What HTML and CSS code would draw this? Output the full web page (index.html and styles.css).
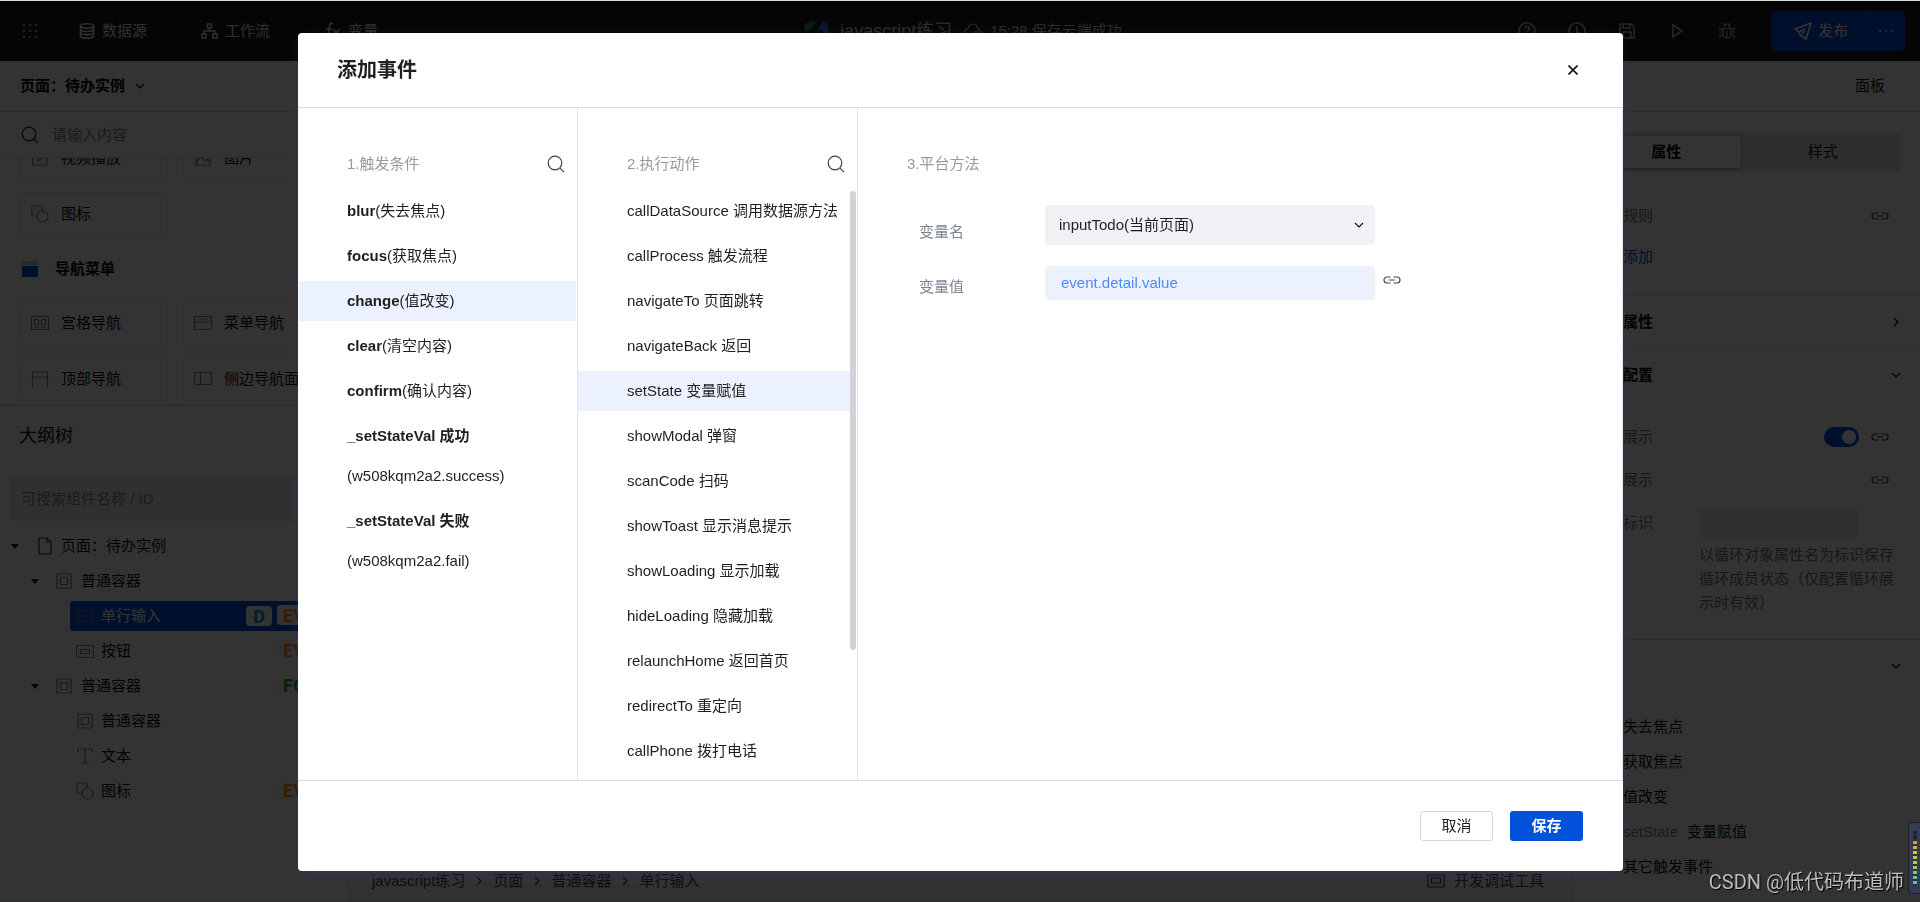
FILE: index.html
```html
<!DOCTYPE html>
<html lang="zh-CN">
<head>
<meta charset="utf-8">
<title>添加事件</title>
<link rel="stylesheet" href="styles.css">
</head>
<body>
<svg class="sprite" aria-hidden="true">
  <symbol id="search" viewBox="0 0 18 18"><circle cx="8" cy="8" r="6.8"/><path d="M13 13.2l4 4"/></symbol>
  <symbol id="down" viewBox="0 0 10 10"><path d="M1 3l4 4 4-4"/></symbol>
  <symbol id="right" viewBox="0 0 10 10"><path d="M3 1l4 4-4 4"/></symbol>
  <symbol id="link" viewBox="0 0 18 10"><path d="M7.500 2H4a3 3 0 0 0 0 6h3.500M10.500 2H14a3 3 0 0 1 0 6h-3.500M6 5h6"/></symbol>
  <symbol id="box" viewBox="0 0 16 16"><path d="M1 1h14v14H1zM4.500 4.500h7v7h-7z"/></symbol>
  <symbol id="shapes" viewBox="0 0 18 18"><path d="M6 11H1V1h10v5"/><circle cx="11.500" cy="11.500" r="5.500"/></symbol>
</svg>

<div class="app">
  <header class="topbar">
    <nav class="topnav">
      <button class="nav-item apps" aria-label="应用"><svg width="16" height="16" viewBox="0 0 16 16"><g class="solid"><circle cx="2" cy="2" r="1.200"/><circle cx="8" cy="2" r="1.200"/><circle cx="14" cy="2" r="1.200"/><circle cx="2" cy="8" r="1.200"/><circle cx="8" cy="8" r="1.200"/><circle cx="14" cy="8" r="1.200"/><circle cx="2" cy="14" r="1.200"/><circle cx="8" cy="14" r="1.200"/><circle cx="14" cy="14" r="1.200"/></g></svg></button>
      <button class="nav-item source"><svg class="thick" width="16" height="16" viewBox="0 0 16 16"><ellipse cx="8" cy="3" rx="6.500" ry="2.200"/><path d="M1.500 3v10c0 3 13 3 13 0V3M1.500 6.300c0 3 13 3 13 0M1.500 9.600c0 3 13 3 13 0"/></svg>数据源</button>
      <button class="nav-item flow"><svg class="thick" width="17" height="16" viewBox="0 0 17 16"><path d="M6.500 1h4v4h-4zM1 11h4v4H1zM12 11h4v4h-4zM8.500 5v3M3 11V8h11v3"/></svg>工作流</button>
      <button class="nav-item"><svg class="thick" width="17" height="18" viewBox="0 0 17 18"><path d="M9 2C6 0 5.500 3 5.200 6L4 14c-.5 3-2 3-3 2M2 7h6M9 8c3-1 3 7 7 6M15.500 8c-3 0-4 6-7 6"/></svg>变量</button>
    </nav>
    <div class="project">
      <svg width="23" height="20" viewBox="0 0 23 20"><path class="logo-green" d="M0 3l6-3 5 2-5 6-6 3z"/><path class="logo-blue" d="M12 11L18 0l5 3v15h-5V8z"/></svg>
      <strong>javascript练习</strong>
      <svg width="18" height="16" viewBox="0 0 18 16"><path d="M5 13H4a3.500 3.500 0 0 1 0-7 5 5 0 0 1 10 0 3.500 3.500 0 0 1 3 4"/><circle class="logo-green" cx="13" cy="11" r="4"/></svg>
      <span>15:28 保存云端成功</span>
    </div>
    <div class="tools">
      <button aria-label="帮助"><svg class="thick" width="18" height="18" viewBox="0 0 18 18"><circle cx="9" cy="9" r="8"/><path d="M6.500 7c0-3.500 5-3 5-.3C11.500 8.500 9 8.500 9 10.500M9 12.500v1"/></svg></button>
      <button aria-label="历史"><svg class="thick" width="18" height="18" viewBox="0 0 18 18"><circle cx="9" cy="9" r="8"/><path d="M9 4v6l3 2"/></svg></button>
      <button aria-label="保存页面"><svg class="thick" width="16" height="16" viewBox="0 0 16 16"><path d="M1 1h11l3 3v11H1zM4 1v4h7V1M4 15V9h8v6"/></svg></button>
      <button aria-label="运行"><svg class="thick" width="16" height="16" viewBox="0 0 16 16"><path d="M4 2l9 6-9 6z"/></svg></button>
      <button aria-label="调试"><svg width="16" height="18" viewBox="0 0 16 18"><path d="M4 6.500h8V12a4 4 0 0 1-8 0zM5.500 6V4.500a2.500 2.500 0 0 1 5 0V6M8 9v7M0 10h4M12 10h4M4 7.500H1V5M12 7.500h3V5M4 13H1v3M12 13h3v3M5.500 3L4 1M10.500 3L12 1"/></svg></button>
      <div class="publish">
        <button class="publish-main"><svg class="thick" width="18" height="18" viewBox="0 0 18 18"><path d="M17 1L1 7l4 3 1 3 6 4zM5 10l6-3M8 12l3-3"/></svg>发布</button>
        <button class="publish-more" aria-label="更多"><svg width="16" height="4" viewBox="0 0 16 4"><g class="solid"><circle cx="2" cy="2" r="1.300"/><circle cx="8" cy="2" r="1.300"/><circle cx="14" cy="2" r="1.300"/></g></svg></button>
      </div>
    </div>
  </header>

  <div class="workspace">
    <aside class="left">
      <button class="page-switch">页面：待办实例 <svg width="10" height="10"><use href="#down"/></svg></button>
      <label class="lib-search"><svg width="18" height="18"><use href="#search"/></svg><input type="text" placeholder="请输入内容"></label>
      <div class="library">
        <div class="cards">
          <button><svg width="18" height="16" viewBox="0 0 18 16"><path d="M2 1h14v14H2zM7 5v6l5-3z"/></svg>视频播放</button>
          <button><svg width="18" height="16" viewBox="0 0 18 16"><path d="M2 1h14v14H2zM2 13l5-6 4 4 2-2 3 3M11 4h2"/></svg>图片</button>
          <button><svg width="18" height="18"><use href="#shapes"/></svg>图标</button>
        </div>
        <h3><svg width="16" height="16" viewBox="0 0 16 16"><path class="menu-top" d="M0 0h16v4H0z"/><path class="menu-body" d="M0 5h16v11H0z"/></svg>导航菜单</h3>
        <div class="cards">
          <button><svg width="18" height="14" viewBox="0 0 18 14"><path d="M.5.5h17v13H.5zM3.500 3.500h4v5h-4zM10.500 3.500h4v5h-4zM3 11h5M10 11h5"/></svg>宫格导航</button>
          <button><svg width="18" height="14" viewBox="0 0 18 14"><path d="M.5.5h17v13H.5zM.5 6h17M3 3h2M6 3h7"/></svg>菜单导航</button>
          <button><svg width="18" height="16" viewBox="0 0 18 16"><path d="M1.500 16V1h15v15M1.500 6h15"/></svg>顶部导航</button>
          <button><svg width="18" height="13" viewBox="0 0 18 13"><path d="M.5.500h17v12H.5zM6.500.5v12"/></svg>侧边导航面板</button>
        </div>
      </div>
      <h2>大纲树</h2>
      <div class="tree-search"><input type="text" aria-label="搜索组件" placeholder="可搜索组件名称 / ID"><span class="stepper"></span></div>
      <ul class="tree">
        <li><i class="caret"></i><svg class="file" width="14" height="18" viewBox="0 0 14 18"><path d="M1 1h8l4 4v12H1zM9 1v4h4"/></svg>页面：待办实例</li>
        <li class="level1"><i class="caret"></i><svg width="16" height="16"><use href="#box"/></svg>普通容器</li>
        <li class="level2 selected"><svg width="18" height="12" viewBox="0 0 18 12"><path d="M.5 1h17v10H.5zM4 3.500v5"/></svg>单行输入<b class="tag data">D</b><span class="tags"><b class="tag event">EV</b></span></li>
        <li class="level2"><svg width="18" height="13" viewBox="0 0 18 13"><path d="M.5.500h17v12H.5zM4.500 4.500h9v4h-9z"/></svg>按钮<span class="tags"><b class="tag event">EV</b></span></li>
        <li class="level1"><i class="caret"></i><svg width="16" height="16"><use href="#box"/></svg>普通容器<span class="tags"><b class="tag loop">FOR</b></span></li>
        <li class="level2"><svg width="18" height="16"><use href="#box"/></svg>普通容器</li>
        <li class="level2"><svg width="18" height="16" viewBox="0 0 18 16"><path d="M2 4V1h14v3M9 1v14M5 15h8"/></svg>文本</li>
        <li class="level2"><svg width="18" height="18"><use href="#shapes"/></svg>图标<span class="tags"><b class="tag event">EV</b></span></li>
      </ul>
    </aside>

    <main class="canvas">
      <footer class="crumbs">
        <span>javascript练习</span><svg width="10" height="10"><use href="#right"/></svg>
        <span>页面</span><svg width="10" height="10"><use href="#right"/></svg>
        <span>普通容器</span><svg width="10" height="10"><use href="#right"/></svg>
        <span>单行输入</span>
        <button class="devtools"><svg width="18" height="14" viewBox="0 0 18 14"><path d="M1 1h16v12H1zM4.500 4h9v5h-9z"/></svg>开发调试工具</button>
      </footer>
    </main>

    <aside class="right">
      <div class="panel-title">面板</div>
      <div class="tabs"><button class="active">属性</button><button>样式</button></div>
      <section class="rules">
        <div class="prop"><span>规则</span><svg width="18" height="10"><use href="#link"/></svg></div>
        <a href="#add">添加</a>
      </section>
      <h4>属性<svg width="10" height="10"><use href="#right"/></svg></h4>
      <section class="config">
        <h4>配置<svg width="10" height="10"><use href="#down"/></svg></h4>
        <div class="prop"><label for="show">展示</label><input id="show" class="switch" type="checkbox" checked><svg width="18" height="10"><use href="#link"/></svg></div>
        <div class="prop"><span>展示</span><svg width="18" height="10"><use href="#link"/></svg></div>
        <div class="prop key"><label for="key">标识</label><div><input id="key" type="text"><p>以循环对象属性名为标识保存循环成员状态（仅配置循环展示时有效）</p></div></div>
      </section>
      <h4 class="events-title"><svg width="10" height="10"><use href="#down"/></svg></h4>
      <ul class="events">
        <li>失去焦点</li><li>获取焦点</li><li>值改变</li><li><span>setState</span>变量赋值</li><li>其它触发事件</li>
      </ul>
    </aside>
  </div>
</div>

<div class="overlay">
  <div class="modal" role="dialog" aria-labelledby="dialog-title">
    <header class="modal-head"><h1 id="dialog-title">添加事件</h1><button aria-label="关闭"><svg class="thick" width="10" height="10" viewBox="0 0 10 10"><path d="M.5.5l9 9M9.500.5l-9 9"/></svg></button></header>
    <div class="modal-body">
      <section class="col">
        <div class="col-head"><span>1.触发条件</span><button aria-label="搜索触发条件"><svg width="18" height="18"><use href="#search"/></svg></button></div>
        <ul class="options triggers">
          <li><button><b>blur</b>(失去焦点)</button></li>
          <li><button><b>focus</b>(获取焦点)</button></li>
          <li><button class="on"><b>change</b>(值改变)</button></li>
          <li><button><b>clear</b>(清空内容)</button></li>
          <li><button><b>confirm</b>(确认内容)</button></li>
          <li><button><b>_setStateVal 成功</b><br>(w508kqm2a2.success)</button></li>
          <li><button><b>_setStateVal 失败</b><br>(w508kqm2a2.fail)</button></li>
        </ul>
      </section>
      <section class="col">
        <div class="col-head"><span>2.执行动作</span><button aria-label="搜索执行动作"><svg width="18" height="18"><use href="#search"/></svg></button></div>
        <div class="scroller">
          <ul class="options">
            <li><button>callDataSource 调用数据源方法</button></li>
            <li><button>callProcess 触发流程</button></li>
            <li><button>navigateTo 页面跳转</button></li>
            <li><button>navigateBack 返回</button></li>
            <li><button class="on">setState 变量赋值</button></li>
            <li><button>showModal 弹窗</button></li>
            <li><button>scanCode 扫码</button></li>
            <li><button>showToast 显示消息提示</button></li>
            <li><button>showLoading 显示加载</button></li>
            <li><button>hideLoading 隐藏加载</button></li>
            <li><button>relaunchHome 返回首页</button></li>
            <li><button>redirectTo 重定向</button></li>
            <li><button>callPhone 拨打电话</button></li>
          </ul>
          <div class="track"><div class="thumb"></div></div>
        </div>
      </section>
      <section class="col">
        <div class="col-head"><span>3.平台方法</span></div>
        <form class="fields">
          <div class="field"><label for="var-name">变量名</label><div class="select"><select id="var-name"><option>inputTodo(当前页面)</option></select><svg width="10" height="10"><use href="#down"/></svg></div></div>
          <div class="field value"><label for="var-value">变量值</label><input id="var-value" type="text" value="event.detail.value"><button type="button" aria-label="绑定变量"><svg width="18" height="10"><use href="#link"/></svg></button></div>
        </form>
      </section>
    </div>
    <footer class="modal-foot"><button class="cancel">取消</button><button class="save">保存</button></footer>
  </div>
</div>
<div class="watermark">CSDN @低代码布道师</div>
<div class="meter"><div class="bars"></div></div>
</body>
</html>
```
FILE: styles.css
```css
* { box-sizing: border-box; }
body {
  margin: 0;
  height: 100vh;
  overflow: hidden;
  border-top: 1px solid #d9dfdd;
  border-bottom: 1px solid #38292d;
  font: 15px/20px "Liberation Sans", "Noto Sans CJK SC", sans-serif;
  color: #111;
  background: #fff;
}
button, input, select { font: inherit; color: inherit; border: 0; padding: 0; background: none; }
ul, h1, h2, h3, h4, p { margin: 0; padding: 0; list-style: none; font-size: 15px; }
a { text-decoration: none; }
svg { fill: none; stroke: currentColor; stroke-width: 1.2; flex: none; }
.thick { stroke-width: 1.6; }
.solid { fill: currentColor; stroke: none; }
.sprite { position: absolute; width: 0; height: 0; }

.app { height: 100%; display: flex; flex-direction: column; }

/* top bar */
.topbar {
  height: 60px;
  flex: none;
  display: flex;
  align-items: center;
  justify-content: space-between;
  padding: 0 15px 0 22px;
  background: #1b1b1b;
  color: #e8e8e8;
}
.topnav, .tools, .nav-item, .project, .publish, .publish button { display: flex; align-items: center; }
.topnav, .tools { flex: 1; }
.nav-item { gap: 7px; }
.apps { margin-right: 41px; color: #aaa; }
.source { margin-right: 54px; }
.flow { margin-right: 54px; }
.project { gap: 12px; color: #d8d8d8; }
.project strong { font-size: 18px; font-weight: 400; }
.project span { margin-left: -4px; }
.logo-green { fill: #14935a; stroke: none; }
.logo-blue { fill: #3a6bd8; stroke: none; }
.tools { justify-content: flex-end; color: #bbb; }
.tools > button { width: 50px; display: flex; justify-content: center; }
.publish { margin-left: 19px; height: 40px; background: #0052d9; border-radius: 4px; color: #fff; }
.publish button { height: 40px; justify-content: center; gap: 6px; }
.publish .publish-main { width: 95px; padding-left: 5px; }
.publish .publish-more { width: 39px; border-left: 1px solid #1c60dc; color: #aac4f4; }

.workspace { flex: 1; min-height: 0; display: flex; }

/* component library and outline */
.left { width: 349px; flex: none; border-right: 1px solid #e2e4ea; }
.page-switch {
  width: 100%;
  height: 51px;
  padding: 0 20px;
  display: flex;
  align-items: center;
  gap: 10px;
  font-weight: 700;
  color: #000;
  border-bottom: 1px solid #dfe2e8;
}
.lib-search { height: 46px; padding: 0 21px; display: flex; align-items: center; gap: 13px; border-bottom: 1px solid #dfe2e8; }
.lib-search input { flex: 1; min-width: 0; }
input::placeholder { color: #888; opacity: 1; }
.library {
  height: 246px;
  padding: 0 20px 2px;
  overflow: hidden;
  display: flex;
  flex-direction: column;
  justify-content: flex-end;
}
.cards { display: grid; grid-template-columns: 148px 148px; gap: 11px 15px; flex: none; }
.cards button {
  height: 45px;
  padding: 0 0 2px 10px;
  display: flex;
  align-items: center;
  gap: 12px;
  white-space: nowrap;
  overflow: hidden;
  border: 1px solid #e4e6ea;
  border-radius: 4px;
}
.cards svg { color: #7d8596; }
.library h3 { height: 64px; flex: none; padding-left: 2px; display: flex; align-items: center; gap: 17px; color: #000; }
.menu-top { fill: #c3cbe8; stroke: none; }
.menu-body { fill: #0052d9; stroke: none; }
.left h2 { height: 72px; padding: 20px 19px 0; font-size: 18px; font-weight: 400; border-top: 2px solid #dfe2e8; }
.tree-search { display: flex; margin-left: 10px; height: 45px; }
.tree-search input { width: 280px; padding-left: 11px; background: #eeeff3; border-radius: 4px; }
.stepper { width: 30px; border: 1px solid #d5d8e0; background: linear-gradient(#d5d8e0, #d5d8e0) center / 100% 1px no-repeat; }
.tree { padding: 10px 10px 0; }
.tree li { display: flex; align-items: center; height: 30px; margin-bottom: 5px; padding-left: 1px; gap: 9px; }
.tree svg { color: #7d8596; }
.tree .file { margin-left: 10px; color: #444; }
.caret { border: 4px solid transparent; border-top: 5px solid #111; border-bottom: 0; }
.tree .level1 { padding-left: 21px; }
.tree .level1 .caret { margin-right: 8px; }
.tree .level2 { margin-left: 60px; padding-left: 6px; gap: 7px; }
.tree .selected { background: #0052d9; color: #fff; border-radius: 3px; }
.tags { width: 61px; margin-left: auto; }
.tag { display: inline-block; height: 20px; padding: 0 6px; font: 700 18px/22px Roboto, sans-serif; border-radius: 4px; background: #fbf8f4; }
.selected .tag { background: #fff; }
.data { margin-left: auto; padding: 0 7px; margin-right: -2px; color: #0594b8; }
.data + .tags { margin-left: 0; }
.event { color: #ff9500; }
.loop { color: #1fa535; }

/* canvas */
.canvas { flex: 1; min-width: 0; display: flex; flex-direction: column; justify-content: flex-end; background: #f5f6f8; }
.crumbs { height: 40px; padding: 0 28px 0 23px; display: flex; align-items: center; gap: 9px; color: #444; }
.devtools { margin-left: auto; display: flex; align-items: center; gap: 9px; }

/* property panel */
.right { width: 348px; flex: none; border-left: 1px solid #dfe2e8; }
.panel-title { height: 51px; padding: 15px 35px 0; text-align: right; border-bottom: 1px solid #dfe2e8; }
.tabs { margin: 20px 19px 0 15px; padding: 4px; height: 40px; display: grid; grid-template-columns: 1fr 1fr; gap: 8px; background: #dde4ea; border-radius: 6px; }
.tabs .active { background: #fff; font-weight: 700; color: #000; border-radius: 3px; box-shadow: 0 1px 3px #999; }
.right h4 { height: 54px; padding: 0 19px 0 50px; display: flex; align-items: center; justify-content: space-between; color: #000; }
.prop { display: flex; align-items: center; gap: 12px; height: 43px; padding: 0 31px 0 50px; color: #777; }
.prop svg { color: #333; }
.prop span, .prop label { margin-right: auto; }
.rules { height: 123px; padding-top: 22px; border-bottom: 1px solid #dfe2e8; }
.rules a { display: block; padding: 9px 50px; line-height: 20px; color: #0052d9; }
.rules .prop { height: 44px; }
.rules + h4 { border-bottom: 1px solid #dfe2e8; }
.config { height: 291px; border-bottom: 1px solid #dfe2e8; }
.config h4 { height: 52px; margin-bottom: 14px; }
.switch { appearance: none; margin: 0; width: 35px; height: 20px; padding: 3px; border-radius: 10px; background: #0052d9; display: flex; justify-content: flex-end; }
.switch::before { content: ""; width: 14px; height: 14px; border-radius: 50%; background: #fff; }
.prop.key { height: auto; align-items: flex-start; padding-right: 23px; padding-top: 7px; }
.key label { line-height: 30px; }
.key div { width: 198px; }
.key input { width: 159px; height: 30px; display: block; background: #f0f1f5; }
.key p { line-height: 24px; padding-top: 5px; }
.right .events-title { height: 51px; justify-content: flex-end; }
.events { padding: 18px 0 0 50px; }
.events li { line-height: 35px; white-space: nowrap; }
.events span { color: #888; margin-right: 9px; }

/* dialog */
.overlay { position: fixed; inset: 1px 0; display: flex; padding: 32px 297px 30px 298px; background: rgba(0, 0, 0, .8); }
.modal { flex: 1; min-width: 0; display: flex; flex-direction: column; background: #fff; border-radius: 4px; box-shadow: 0 4px 12px rgba(54, 60, 110, .3); color: #1f1f1f; }
.modal-head { height: 75px; padding: 0 45px 0 39px; display: flex; align-items: center; justify-content: space-between; border-bottom: 1px solid #d6d8e2; }
.modal-head h1 { font-size: 20px; line-height: 28px; }
.modal-head button { display: flex; padding: 0; color: #111; }
.modal-body { flex: 1; min-height: 0; display: grid; grid-template-columns: 280px 280px 1fr; }
.col { display: flex; flex-direction: column; min-height: 0; border-right: 1px solid #e3e4e9; }
.col-head { height: 83px; padding: 46px 12px 17px 49px; display: flex; align-items: center; justify-content: space-between; color: #999; }
.col-head button { display: flex; color: #444; }
.options { flex: 1; min-width: 0; }
.triggers { padding: 0 1px; }
.options li { margin-bottom: 5px; }
.options button { width: 100%; padding-left: 49px; text-align: left; line-height: 40px; white-space: nowrap; }
.triggers button { padding-left: 48px; }
.options .on { background: #ebf1fe; }
.scroller { flex: 1; min-height: 0; display: flex; overflow: hidden; }
.track { width: 7px; padding-right: 1px; }
.thumb { height: 78%; border-radius: 3px; background: #d2d3d4; }
.fields { padding-top: 14px; }
.field { display: flex; padding-left: 61px; }
.field label { width: 126px; padding-top: 17px; color: #7d8592; }
.select { width: 330px; display: grid; align-items: center; }
.select select { grid-area: 1 / 1; height: 40px; padding: 0 14px; appearance: none; background: #f0f1f5; border-radius: 4px; }
.select svg { grid-area: 1 / 1; justify-self: end; margin-right: 11px; pointer-events: none; color: #111; }
.value { margin-top: 21px; }
.value label { padding-top: 11px; }
.value input { width: 330px; height: 34px; padding: 0 11px 2px; background: #ebf1fe; border: solid #f0f1f5; border-width: 0 5px; border-radius: 4px; color: #4a8df8; }
.value button { margin-left: 8px; height: 28px; display: flex; align-items: center; color: #444; }
.modal-foot { padding: 30px 40px; display: flex; justify-content: flex-end; gap: 17px; border-top: 1px solid #d6d8e2; }
.modal-foot button { width: 73px; height: 30px; border-radius: 3px; }
.modal-foot .cancel { border: 1px solid #d3d7e2; }
.save { background: #0052d9; color: #fff; font-weight: 700; }

.watermark { position: fixed; right: 16px; bottom: 6px; font: 20px/28px Roboto, "Noto Sans CJK SC", sans-serif; color: #bcbcbc; text-shadow: 1px 1px 1px #000; }
.meter { position: fixed; right: -1px; bottom: 8px; width: 13px; height: 72px; padding: 8px 3px 7px 4px; border: 1px solid #191d2b; border-radius: 4px 0 0 4px; background: #343b52; }
.bars {
  height: 100%;
  background:
    repeating-linear-gradient(transparent 0 3px, #2a3045 3px 5px),
    linear-gradient(#1c2233 0 16%, #e08a45 17%, #d9c23c 38%, #a9cc4a 60%, #3cc8b0);
}
```
